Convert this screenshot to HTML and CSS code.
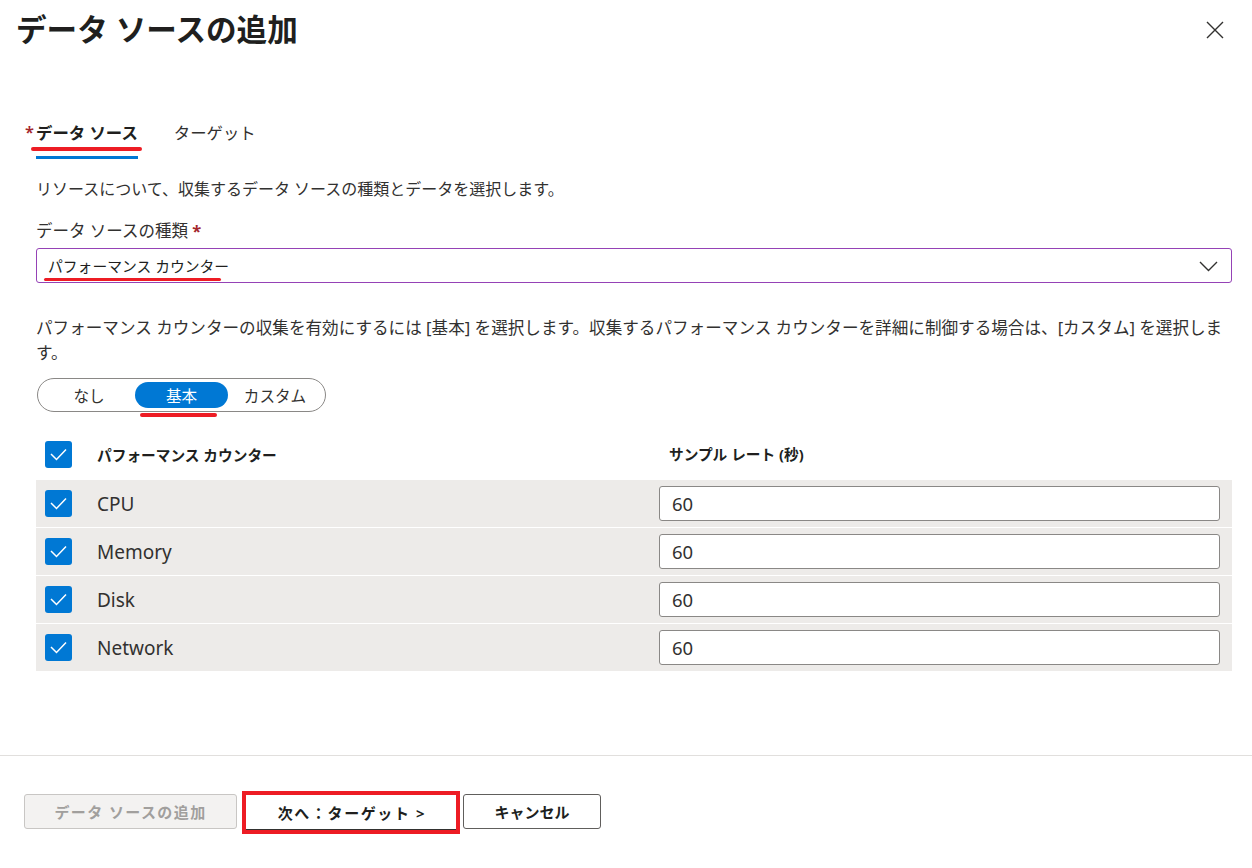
FILE: index.html
```html
<!DOCTYPE html>
<html lang="ja">
<head>
<meta charset="utf-8">
<title>データ ソースの追加</title>
<link rel="stylesheet" href="styles.css">
</head>
<body>
<div class="panel">
  <header class="head">
    <h1 class="title">データ ソースの追加</h1>
    <button class="close" aria-label="閉じる">
      <svg width="18" height="18" viewBox="0 0 18 18"><path d="M1 1 L17 17 M17 1 L1 17" fill="none" stroke="#323130" stroke-width="1.4"/></svg>
    </button>
  </header>

  <main class="content">
    <nav class="tabs">
      <div class="tab tab-active"><span class="tab-req">*</span><span class="tab-label">データ ソース<span class="mark mark-tab"></span></span></div>
      <div class="tab"><span class="tab-label-plain">ターゲット</span></div>
    </nav>

    <p class="desc">リソースについて、収集するデータ ソースの種類とデータを選択します。</p>

    <div class="field-label">データ ソースの種類 <span class="req">*</span></div>
    <div class="select">
      <span class="select-value">パフォーマンス カウンター<span class="mark mark-select"></span></span>
      <svg class="chev" width="19" height="11" viewBox="0 0 19 11"><path d="M1 1 L9.5 9.5 L18 1" fill="none" stroke="#323130" stroke-width="1.4"/></svg>
    </div>

    <p class="help">パフォーマンス カウンターの収集を有効にするには [基本] を選択します。収集するパフォーマンス カウンターを詳細に制御する場合は、[カスタム] を選択します。</p>

    <div class="seg">
      <span class="seg-item">なし</span>
      <span class="seg-item seg-on">基本<span class="mark mark-seg"></span></span>
      <span class="seg-item">カスタム</span>
    </div>

    <div class="grid">
      <div class="grid-head">
        <div class="cell-name">
          <span class="cb"><svg width="27" height="27" viewBox="0 0 27 27"><path d="M6 13 L11.5 18.5 L21 8.5" fill="none" stroke="#fff" stroke-width="1.5"/></svg></span>
          <span class="th">パフォーマンス カウンター</span>
        </div>
        <div class="cell-rate"><span class="th th-rate">サンプル レート (秒)</span></div>
      </div>
      <div class="grid-rows">
        <div class="grid-row">
          <div class="cell-name">
            <span class="cb"><svg width="27" height="27" viewBox="0 0 27 27"><path d="M6 13 L11.5 18.5 L21 8.5" fill="none" stroke="#fff" stroke-width="1.5"/></svg></span>
            <span class="td">CPU</span>
          </div>
          <div class="cell-rate"><div class="input">60</div></div>
        </div>
        <div class="grid-row">
          <div class="cell-name">
            <span class="cb"><svg width="27" height="27" viewBox="0 0 27 27"><path d="M6 13 L11.5 18.5 L21 8.5" fill="none" stroke="#fff" stroke-width="1.5"/></svg></span>
            <span class="td">Memory</span>
          </div>
          <div class="cell-rate"><div class="input">60</div></div>
        </div>
        <div class="grid-row">
          <div class="cell-name">
            <span class="cb"><svg width="27" height="27" viewBox="0 0 27 27"><path d="M6 13 L11.5 18.5 L21 8.5" fill="none" stroke="#fff" stroke-width="1.5"/></svg></span>
            <span class="td">Disk</span>
          </div>
          <div class="cell-rate"><div class="input">60</div></div>
        </div>
        <div class="grid-row">
          <div class="cell-name">
            <span class="cb"><svg width="27" height="27" viewBox="0 0 27 27"><path d="M6 13 L11.5 18.5 L21 8.5" fill="none" stroke="#fff" stroke-width="1.5"/></svg></span>
            <span class="td">Network</span>
          </div>
          <div class="cell-rate"><div class="input">60</div></div>
        </div>
      </div>
    </div>
  </main>

  <footer class="foot">
    <button class="btn btn-disabled" disabled>データ ソースの追加</button>
    <span class="annot-box"><button class="btn btn-next">次へ：ターゲット &gt;</button></span>
    <button class="btn btn-cancel">キャンセル</button>
  </footer>
</div>
</body>
</html>
```

FILE: styles.css
```css
* { box-sizing: border-box; }

html, body {
  margin: 0;
  padding: 0;
  background: #ffffff;
}

body {
  font-family: "Noto Sans", "Noto Sans CJK JP", sans-serif;
  color: #323130;
}

.panel {
  display: flex;
  flex-direction: column;
  min-height: 868px;
  width: 1252px;
}

/* header */
.head {
  display: flex;
  align-items: center;
  justify-content: space-between;
  padding: 9px 28px 0 16px;
  height: 49px;
}

.title {
  margin: 0;
  font-size: 30.6px;
  line-height: 40px;
  font-weight: 700;
  color: #201f1e;
}

.close {
  border: 0;
  background: transparent;
  padding: 0;
  width: 18px;
  height: 18px;
  display: flex;
  margin-top: 1px;
}

/* content */
.content {
  flex: 1;
  padding: 0 20px 0 36px;
  display: flex;
  flex-direction: column;
  align-items: flex-start;
}

.tabs {
  display: flex;
  gap: 36px;
  margin-top: 72px;
  font-size: 16.4px;
  line-height: 24px;
}

.tab {
  display: flex;
  align-items: flex-start;
}

.tab-active {
  margin-left: -11px;
}

.tab-req {
  color: #a4262c;
  width: 11px;
  font-weight: 600;
  line-height: 22px;
}

.tab-label {
  position: relative;
  display: block;
  padding-bottom: 11px;
  border-bottom: 3px solid #0078d4;
  font-weight: 600;
  color: #201f1e;
}

.tab-label-plain {
  display: block;
  color: #323130;
}

.mark {
  position: absolute;
  background: #ed1c24;
  border-radius: 3px;
}

.mark-tab {
  top: 26px;
  left: -5px;
  right: -4px;
  height: 4px;
}

.desc {
  margin: 18px 0 0;
  font-size: 16px;
  line-height: 24px;
}

.field-label {
  margin-top: 19px;
  font-size: 16.5px;
  line-height: 22px;
}

.req {
  color: #a4262c;
  font-weight: 700;
}

.select {
  margin-top: 6px;
  width: 100%;
  height: 35px;
  border: 1px solid #9542b6;
  border-radius: 3px;
  display: flex;
  align-items: center;
  justify-content: space-between;
  padding: 0 13px 0 11px;
}

.select-value {
  position: relative;
  font-size: 14.8px;
  line-height: 20px;
  color: #201f1e;
}

.mark-select {
  top: 22px;
  left: -4px;
  right: 8px;
  height: 3px;
}

.chev {
  display: block;
  margin-top: 2px;
}

.help {
  margin: 32px 0 0;
  font-size: 16.6px;
  line-height: 25px;
  max-width: 1196px;
}

/* segmented control */
.seg {
  margin-top: 13px;
  display: flex;
  height: 34px;
  padding: 3px;
  border: 1px solid #8a8886;
  border-radius: 17px;
  margin-left: 1px;
  font-size: 15.6px;
}

.seg-item {
  position: relative;
  width: 94px;
  display: flex;
  align-items: center;
  justify-content: center;
  border-radius: 13px;
  color: #323130;
}

.seg-item:first-child {
  padding-left: 2px;
}

.seg-on {
  width: 93px;
  background: #0078d4;
  color: #ffffff;
}

.mark-seg {
  top: 31px;
  left: 5px;
  right: 11px;
  height: 4px;
}

/* grid */
.grid {
  margin-top: 19px;
  width: 100%;
}

.grid-head {
  display: grid;
  grid-template-columns: 623px 1fr;
  height: 46px;
  align-items: center;
}

.grid-rows {
  margin-top: 3px;
  display: flex;
  flex-direction: column;
  gap: 1px;
}

.grid-row {
  display: grid;
  grid-template-columns: 623px 1fr;
  height: 47px;
  align-items: center;
  background: #edebe9;
}

.cell-name {
  display: flex;
  align-items: center;
  gap: 25px;
  padding-left: 9px;
}

.cell-rate {
  padding-right: 12px;
}

.cb {
  width: 27px;
  height: 27px;
  background: #0078d4;
  border-radius: 3px;
  display: flex;
  flex: none;
}

.th {
  font-weight: 700;
  font-size: 14.7px;
  color: #201f1e;
}

.th-rate {
  padding-left: 10px;
}

.td {
  font-size: 19px;
  color: #323130;
}

.input {
  height: 35px;
  border: 1px solid #8a8886;
  border-radius: 3px;
  background: #ffffff;
  padding-left: 12px;
  display: flex;
  align-items: center;
  font-size: 18.5px;
  color: #323130;
}

/* footer */
.foot {
  height: 113px;
  border-top: 1px solid #e1dfdd;
  display: flex;
  align-items: flex-start;
  padding: 35px 0 0 24px;
}

.btn {
  font-family: "Noto Sans", "Noto Sans CJK JP", sans-serif;
  font-size: 15px;
  font-weight: 700;
  height: 35px;
  border-radius: 3px;
  background: #ffffff;
  color: #201f1e;
  padding: 0;
  margin-top: 3px;
}

.btn-disabled {
  width: 213px;
  background: #f3f2f1;
  border: 1px solid #c8c6c4;
  color: #a19f9d;
  letter-spacing: 1.4px;
}

.annot-box {
  margin-left: 5px;
  width: 218px;
  height: 43px;
  border: 4px solid #ed1c24;
  display: flex;
}

.btn-next {
  width: 100%;
  height: 35px;
  margin: 0;
  border: 0;
  border-bottom: 1px solid #323130;
  border-radius: 0;
  padding-left: 2px;
  letter-spacing: 1.6px;
}

.btn-cancel {
  margin-left: 3px;
  width: 138px;
  border: 1px solid #605e5c;
}
```
